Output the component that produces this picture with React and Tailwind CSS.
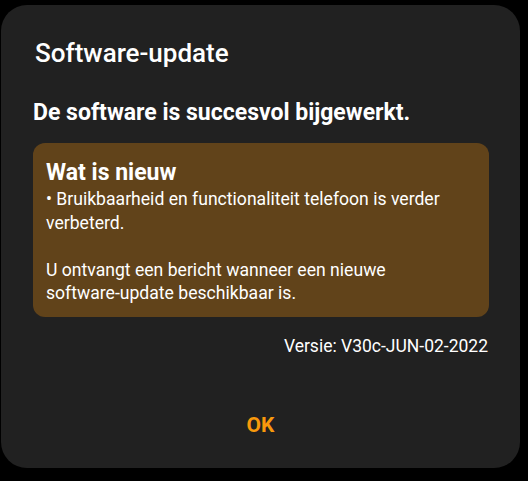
import React from 'react';

const App = () => {
    return (
        <div
            className="w-[528px] h-[481px] bg-black pl-px pt-[5px] pr-[8px] pb-[13px]"
            style={{ fontFamily: 'Roboto, "Noto Sans", sans-serif' }}
        >
            <div className="h-full rounded-[26px] bg-[#212121] flex flex-col pt-[32px]">
                <h1 className="pl-[34px] text-[26px] leading-[32px] font-medium text-white">
                    Software-update
                </h1>
                <p className="mt-[30px] pl-[32px] text-[23px] leading-[28px] font-bold text-white">
                    De software is succesvol bijgewerkt.
                </p>

                {/* Wat is nieuw */}
                <div className="mt-[16px] ml-[32px] mr-[31px] rounded-[12px] bg-[#61431a] pt-[16px] pb-[11.5px] pl-[13px] pr-3 text-white">
                    <h2 className="text-[23px] leading-[28px] font-bold">Wat is nieuw</h2>
                    <p className="mt-px text-[17.6px] leading-[23.5px]">
                        • Bruikbaarheid en functionaliteit telefoon is verder verbeterd.
                    </p>
                    <p className="mt-[23.5px] text-[17.6px] leading-[23.5px]">
                        U ontvangt een bericht wanneer een nieuwe{' '}
                        <span className="whitespace-nowrap">software-update</span> beschikbaar is.
                    </p>
                </div>

                <p className="mt-[17px] pr-[32px] text-right text-[17.5px] leading-[24px] text-white">
                    Versie: V30c-JUN-02-2022
                </p>

                <div className="mt-[53px] flex justify-center">
                    <button className="text-[21px] leading-[28px] font-bold text-[#f8990c]">OK</button>
                </div>
            </div>
        </div>
    );
};

export default App;
